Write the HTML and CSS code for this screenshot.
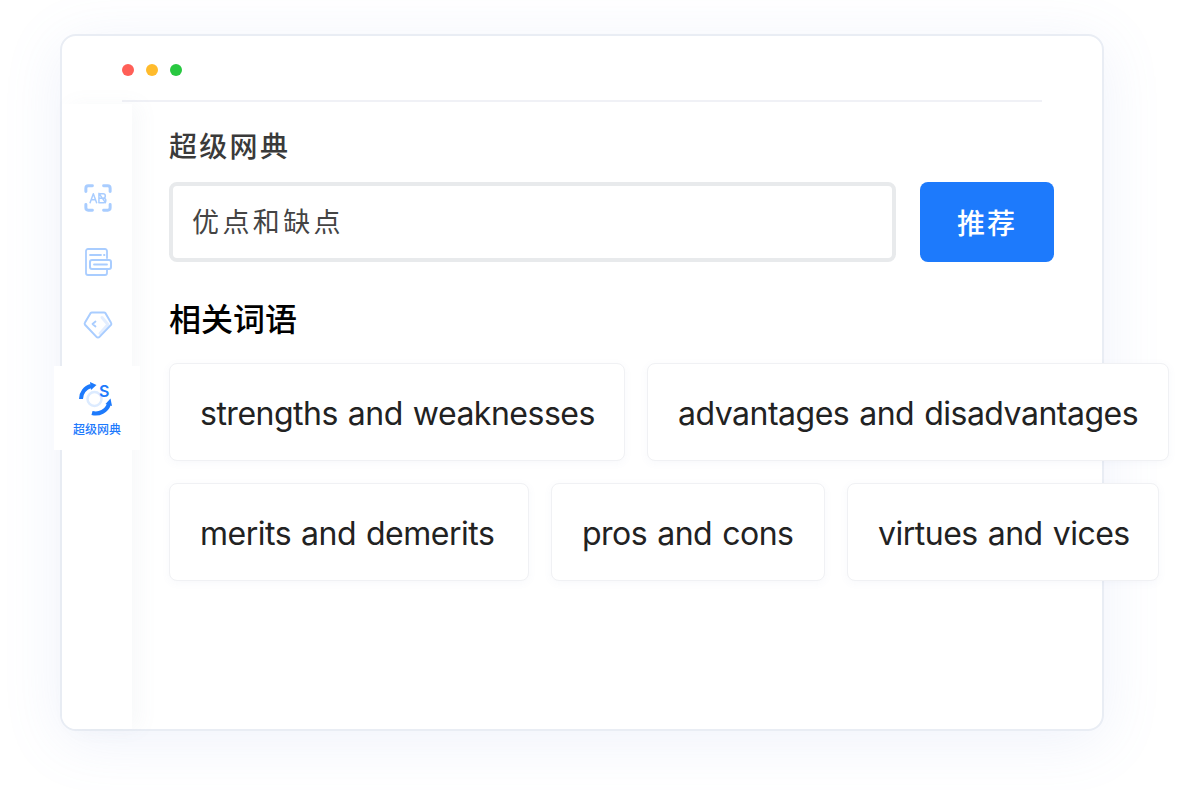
FILE: index.html
```html
<!DOCTYPE html>
<html lang="zh">
<head>
  <meta charset="UTF-8" />
  <title>超级网典</title>
  <link rel="stylesheet" href="styles.css">
</head>
<body>

<div class="window">
  <div class="titlebar">
    <span class="dot red"></span>
    <span class="dot yellow"></span>
    <span class="dot green"></span>
  </div>

  <div class="body">
    <div class="sidebar">
      <div class="side-item first">
        <svg class="scan-icon" width="28" height="28" viewBox="0 0 30 30" fill="none" stroke="#a9cdff" stroke-width="3.200" stroke-linecap="round" stroke-linejoin="round">
          <path d="M2 8V4.500A2.500 2.500 0 0 1 4.500 2H9M21 2h4.500A2.500 2.500 0 0 1 28 4.500V8M28 22v3.500a2.500 2.500 0 0 1-2.500 2.500H21M9 28H4.500A2.500 2.500 0 0 1 2 25.500V22"/>
          <path stroke-width="1.600" d="M6.500 20 10 10.500 13.500 20M7.800 17h4.500M16 10.500h4.500a2.300 2.300 0 0 1 0 4.700H16zM16 15.200h5a2.400 2.400 0 0 1 0 4.800h-5zM16 10l7 10"/>
        </svg>
      </div>
      <div class="side-item">
        <svg width="30" height="30" viewBox="0 0 30 30" fill="none" stroke="#a9cdff" stroke-width="1.800" stroke-linecap="round" stroke-linejoin="round">
          <path d="M24 11V4a2 2 0 0 0-2-2H5a2 2 0 0 0-2 2v22a2 2 0 0 0 2 2h17a2 2 0 0 0 2-2v-3"/>
          <path d="M7 8h11M21 8h.5"/>
          <rect x="7" y="13" width="21" height="9" rx="2" stroke-width="2"/>
          <path d="M11 17.500h13"/>
        </svg>
      </div>
      <div class="side-item">
        <svg width="30" height="30" viewBox="0 0 30 30" fill="none" stroke="#a9cdff" stroke-width="2" stroke-linecap="round" stroke-linejoin="round">
          <path d="M19 7.500l6 7-8 9" stroke="#e3eeff" stroke-width="3"/>
          <path d="M9 2.500h12a2 2 0 0 1 1.500.7l5.500 9.500a2 2 0 0 1 0 2.200l-11.500 12a2 2 0 0 1-3 0L2 14.700a2 2 0 0 1 0-2.200l5.500-9.300A2 2 0 0 1 9 2.500z"/>
          <path d="M12.500 11.500 9.500 14l3 2.500" stroke-width="1.800"/>
        </svg>
      </div>
      <div class="side-item active">
        <svg class="active-icon" width="40" height="38" viewBox="0 0 40 38" fill="none">
          <circle cx="17.500" cy="18" r="7" stroke="#dcebff" stroke-width="2.500"/>
          <path d="M4 18A13.500 13.500 0 0 1 14 5" stroke="#1d7afc" stroke-width="4"/>
          <path d="M13 1 19.500 4 14 9z" fill="#1d7afc"/>
          <path d="M15 32A14 14 0 0 0 32 23" stroke="#1d7afc" stroke-width="4"/>
          <path d="M28.500 23 35 25 33.500 17.500z" fill="#1d7afc"/>
          <text x="22" y="15.500" class="s-letter">S</text>
        </svg>
        <span class="side-label">超级网典</span>
      </div>
    </div>

    <div class="main">
      <h2 class="title">超级网典</h2>
      <div class="search">
        <div class="input">优点和缺点</div>
        <button class="button">推荐</button>
      </div>
      <h3 class="related">相关词语</h3>
      <div class="chips">
        <div class="chip w456">strengths and weaknesses</div>
        <div class="chip w522">advantages and disadvantages</div>
        <div class="chip w360">merits and demerits</div>
        <div class="chip w274">pros and cons</div>
        <div class="chip w312">virtues and vices</div>
      </div>
    </div>
  </div>
</div>

</body>
</html>
```

FILE: styles.css
```css
body {
  margin: 0;
  padding: 34px 0 0 60px;
  height: 790px;
  box-sizing: border-box;
  overflow: hidden;
  background: #fff;
  font-family: Inter, "Noto Sans CJK SC", sans-serif;
}

.window {
  width: 1044px;
  height: 697px;
  box-sizing: border-box;
  background: #fff;
  border: 2px solid #e9edf4;
  border-radius: 16px;
  box-shadow: 0 10px 60px rgba(120, 150, 220, 0.12);
  display: flex;
  flex-direction: column;
}

.titlebar {
  margin-left: 60px;
  width: 920px;
  height: 60px;
  padding-top: 4px;
  border-bottom: 2px solid #f0f1f6;
  display: flex;
  gap: 12px;
  align-items: center;
}

.dot {
  width: 12px;
  height: 12px;
  border-radius: 50%;
}

.red { background: #ff5f57; }
.yellow { background: #ffbb2c; }
.green { background: #28c840; }

.body {
  flex: 1;
  display: flex;
  min-height: 0;
}

.sidebar {
  width: 70px;
  margin-top: 2px;
  flex-shrink: 0;
  background: #fff;
  box-shadow: 8px 0 20px rgba(120, 130, 160, 0.05);
  border-radius: 0 0 0 14px;
  display: flex;
  flex-direction: column;
  align-items: center;
}

.side-item {
  height: 63px;
  margin-left: 2px;
  display: flex;
  align-items: center;
  justify-content: center;
}

.side-item.first { margin-top: 63px; }

.scan-icon { margin-bottom: 2px; }

.side-item.active {
  margin: 10px 0 0;
  width: 86px;
  height: 84px;
  background: #fff;
  flex-direction: column;
  justify-content: flex-start;
  flex-shrink: 0;
}

.active-icon { margin-top: 15px; }

.s-letter {
  font-family: Inter, sans-serif;
  font-size: 16px;
  font-weight: 600;
  fill: #1d7afc;
}

.side-label {
  font-size: 12px;
  font-weight: 500;
  line-height: 16px;
  margin-top: 3px;
  color: #1d7afc;
}

.main {
  padding: 25px 0 0 37px;
  min-width: 0;
}

.title {
  margin: 0;
  font-size: 28px;
  line-height: 40px;
  font-weight: 500;
  letter-spacing: 2.3px;
  color: #3a3a3a;
}

.search {
  display: flex;
  gap: 24px;
  margin-top: 15px;
}

.input {
  width: 727px;
  height: 80px;
  box-sizing: border-box;
  border: 4px solid #e8eaec;
  border-radius: 8px;
  padding-left: 19px;
  font-size: 27px;
  line-height: 74px;
  letter-spacing: 3.4px;
  color: #444;
}

.button {
  width: 134px;
  height: 80px;
  padding: 0;
  border: none;
  border-radius: 8px;
  background: #1d7afc;
  color: #fff;
  font-family: inherit;
  font-size: 28px;
  font-weight: 500;
  letter-spacing: 2px;
}

.related {
  margin: 36px 0 0;
  font-size: 32px;
  line-height: 44px;
  font-weight: 500;
  color: #000;
}

.chips {
  width: 1010px;
  margin-top: 21px;
  display: flex;
  flex-wrap: wrap;
  gap: 22px;
}

.chip {
  height: 98px;
  box-sizing: border-box;
  padding-left: 30px;
  background: #fff;
  border: 1px solid #f0f1f4;
  border-radius: 8px;
  box-shadow: 0 2px 8px rgba(100, 120, 170, 0.05);
  font-size: 32px;
  letter-spacing: -0.5px;
  word-spacing: 1.5px;
  line-height: 100px;
  color: #222;
  white-space: nowrap;
}

.w456 { width: 456px; }
.w522 { width: 522px; }
.w360 { width: 360px; }
.w274 { width: 274px; }
.w312 { width: 312px; }
```
